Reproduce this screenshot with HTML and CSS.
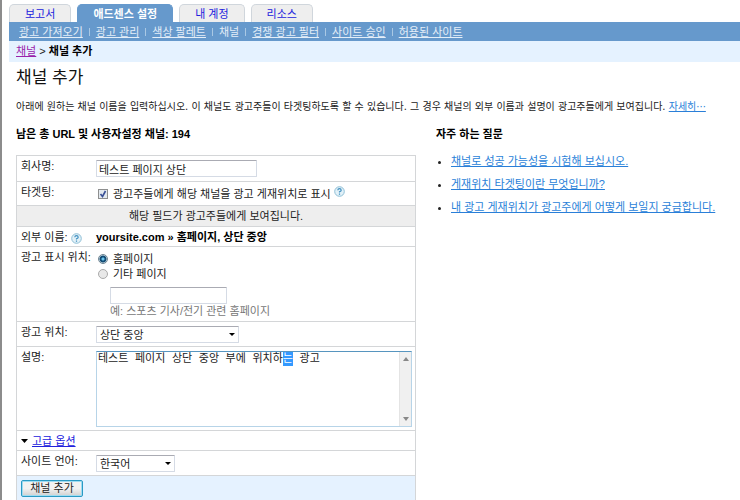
FILE: index.html
```html
<!DOCTYPE html>
<html lang="ko">
<head>
<meta charset="utf-8">
<meta name="viewport" content="width=device-width, initial-scale=1">
<title>채널 추가</title>
<link rel="stylesheet" href="styles.css">
</head>
<body>
<div class="page">
  <header>
    <nav class="tabs">
      <a class="tab" href="#">보고서</a>
      <a class="tab tab-active" href="#">애드센스 설정</a>
      <a class="tab" href="#">내 계정</a>
      <a class="tab" href="#">리소스</a>
    </nav>
    <nav class="subnav">
      <a href="#">광고 가져오기</a><i></i>
      <a href="#">광고 관리</a><i></i>
      <a href="#">색상 팔레트</a><i></i>
      <span>채널</span><i></i>
      <a href="#">경쟁 광고 필터</a><i></i>
      <a href="#">사이트 승인</a><i></i>
      <a href="#">허용된 사이트</a>
    </nav>
    <div class="crumbs"><a href="#">채널</a> &gt; <b>채널 추가</b></div>
  </header>
  <main>
    <h1>채널 추가</h1>
    <p class="intro">아래에 원하는 채널 이름을 입력하십시오. 이 채널도 광고주들이 타겟팅하도록 할 수 있습니다. 그 경우 채널의 외부 이름과 설명이 광고주들에게 보여집니다. <a href="#">자세히···</a></p>
    <div class="columns">
      <section class="main-col">
        <h2>남은 총 URL 및 사용자설정 채널: 194</h2>
        <form class="panel">
          <div class="row row-name">
            <label class="name" for="company">회사명:</label>
            <input class="text company" id="company" type="text" value="테스트 페이지 상단">
          </div>
          <div class="row row-target">
            <span class="name">타겟팅:</span>
            <div class="choice">
              <input class="check" id="target" type="checkbox" checked>
              <label for="target">광고주들에게 해당 채널을 광고 게재위치로 표시</label>
              <svg class="help help-raised" viewBox="0 0 11 11" aria-hidden="true"><circle cx="5.5" cy="5.5" r="4.8" fill="#e2f1f8" stroke="#8fbfd6"/><path d="M3.8 4.2Q3.9 2.7 5.5 2.7T7.2 4.2Q7.2 5.1 5.5 5.7V6.6M5.5 7.6V8.8" fill="none" stroke="#3f8fc0" stroke-width="1.2"/></svg>
            </div>
          </div>
          <div class="row row-note">해당 필드가 광고주들에게 보여집니다.</div>
          <div class="row row-external">
            <span class="name">외부 이름: <svg class="help" viewBox="0 0 11 11" aria-hidden="true"><circle cx="5.5" cy="5.5" r="4.8" fill="#e2f1f8" stroke="#8fbfd6"/><path d="M3.8 4.2Q3.9 2.7 5.5 2.7T7.2 4.2Q7.2 5.1 5.5 5.7V6.6M5.5 7.6V8.8" fill="none" stroke="#3f8fc0" stroke-width="1.2"/></svg></span>
            <b>yoursite.com » 홈페이지, 상단 중앙</b>
          </div>
          <div class="row row-page">
            <span class="name">광고 표시 위치:</span>
            <div class="pages">
              <div class="choice"><input class="radio" id="home" name="page" type="radio" checked><label for="home">홈페이지</label></div>
              <div class="choice"><input class="radio" id="other" name="page" type="radio"><label for="other">기타 페이지</label></div>
              <input class="text other" type="text" aria-label="기타 페이지">
              <p class="hint">예: 스포츠 기사/전기 관련 홈페이지</p>
            </div>
          </div>
          <div class="row row-position">
            <label class="name" for="position">광고 위치:</label>
            <select class="select position" id="position"><option>상단 중앙</option></select>
          </div>
          <div class="row row-desc">
            <label class="name" for="desc">설명:</label>
            <div class="area">
              <textarea id="desc">테스트 페이지 상단 중앙 부에 위치하는 광고</textarea>
              <div class="gutter" aria-hidden="true">
                <svg viewBox="0 0 6 4"><path d="M0 4L3 0L6 4Z"/></svg>
                <svg viewBox="0 0 6 4"><path d="M0 0L3 4L6 0Z"/></svg>
              </div>
            </div>
          </div>
          <div class="row row-advanced">
            <svg class="caret" viewBox="0 0 7 4" aria-hidden="true"><path d="M0 0H7L3.500 4Z"/></svg>
            <a href="#">고급 옵션</a>
          </div>
          <div class="row row-language">
            <label class="name" for="language">사이트 언어:</label>
            <select class="select language" id="language"><option>한국어</option></select>
          </div>
          <div class="row row-submit"><button type="button">채널 추가</button></div>
        </form>
      </section>
      <aside class="faq">
        <h2>자주 하는 질문</h2>
        <ul>
          <li><a href="#">채널로 성공 가능성을 시험해 보십시오.</a></li>
          <li><a href="#">게재위치 타겟팅이란 무엇입니까?</a></li>
          <li><a href="#">내 광고 게재위치가 광고주에게 어떻게 보일지 궁금합니다.</a></li>
        </ul>
      </aside>
    </div>
  </main>
</div>
<script src="script.js"></script>
</body>
</html>
```
FILE: script.js
```js
// Selects the syllable being composed in the description.
const desc = document.getElementById("desc");
const at = desc.value.indexOf("는");
desc.focus({ preventScroll: true });
desc.setSelectionRange(at, at + 1);
```
FILE: styles.css
```css
* { box-sizing: border-box; }
html { overflow: hidden; }
body {
  margin: 0;
  background: #fff;
  color: #222;
  font: 11px/16px "Liberation Sans", "Noto Sans CJK KR", sans-serif;
}
input, select, textarea, button { font: inherit; color: inherit; margin: 0; }
h1, h2, p, ul { margin: 0; padding: 0; }
b, h2 { color: #000; }
.page { border-left: 2px solid #8c8c8c; padding-left: 7px; white-space: nowrap; }
.tabs { display: flex; gap: 6px; padding-top: 4px; }
.tab {
  min-width: 62px;
  height: 18px;
  padding: 1px 15px 0;
  border: 1px solid #d0d6dc;
  border-bottom: 0;
  border-radius: 5px 5px 0 0;
  background: #eee;
  color: #22d;
  text-align: center;
  text-decoration: none;
}
.tab-active { border-color: #69c; background: #69c; color: #fff; font-weight: bold; }
.subnav {
  display: flex;
  align-items: center;
  height: 19px;
  padding-left: 10px;
  background: #69c;
  color: #e4eef8;
}
.subnav a { color: inherit; }
.subnav i { width: 1px; height: 8px; margin: 0 6px; background: #a9c8e4; }
.crumbs { height: 21px; padding: 2px 7px; background: #e5f2ff; }
.crumbs a { color: #92a; }
main { padding-left: 7px; }
h1 { padding-top: 4px; color: #111; font-size: 17px; line-height: 24px; font-weight: normal; }
.intro { padding-top: 9px; font-family: "DejaVu Sans", "Noto Sans CJK KR", sans-serif; font-size: 10px; }
.intro a, .faq a { color: #2a7fd8; }
h2 { font-size: 11px; line-height: 16px; }
.columns { display: flex; gap: 20px; padding-top: 11px; }
.main-col { flex: 0 0 400px; }
.panel { margin-top: 13px; border: 1px solid #d4d6d8; border-bottom: 0; }
.row { display: flex; padding-left: 4px; border-bottom: 1px solid #d4d6d8; }
.name { flex: 0 0 75px; }
.row-name { height: 26px; padding-top: 2px; }
.row-target { height: 24px; }
.row-target .name { padding-top: 2px; }
.row-note { justify-content: center; height: 21px; padding: 2px 0; background: #eee; }
.row-external { height: 20px; padding-top: 2px; }
.row-page { height: 75px; padding-top: 2px; }
.row-position { height: 25px; padding-top: 2px; }
.row-desc { height: 84px; padding-top: 2px; }
.row-advanced { align-items: center; gap: 4px; height: 20px; }
.row-advanced a { color: #22d; }
.row-language { height: 25px; padding-top: 2px; }
.row-submit { height: 32px; padding-top: 4px; background: #e5f2ff; }
.text { height: 17px; padding: 0 2px; border: 1px solid #d5dbe5; border-top-color: #aaabb3; border-radius: 1px; background: #fff; }
.company { width: 161px; margin-top: 2px; }
.choice { display: flex; align-items: center; height: 15px; padding-left: 2px; }
.row-target .choice { height: 23px; }
.check, .radio { flex: none; appearance: none; width: 10px; height: 10px; margin-right: 5px; border: 1px solid #8e8f8f; background: #e3e9ef; }
.check:checked {
  background: #e3e9ef url("data:image/svg+xml,%3Csvg xmlns='http://www.w3.org/2000/svg' viewBox='0 0 8 8'%3E%3Cpath d='M1.500 4L3.500 6.500L6.500 1' fill='none' stroke='%23384f96' stroke-width='1.600'/%3E%3C/svg%3E");
}
.radio { border-color: #aaa; border-radius: 50%; background: #e8e8e8; }
.radio:checked { border-color: #6e8593; background: radial-gradient(circle, #6cc5ee 0 1px, #124d76 2px 3px, #dde8ee 4px); }
.help { width: 11px; height: 11px; vertical-align: middle; }
.help-raised { margin: 0 0 4px 3px; }
.pages { padding-top: 2px; }
.other { display: block; width: 117px; margin: 6px 0 0 14px; }
.hint { margin-left: 14px; line-height: 15px; color: #777; }
.select {
  appearance: none;
  height: 17px;
  margin-top: 2px;
  padding: 0 3px;
  border: 1px solid #d5dbe5;
  border-top-color: #aaabb3;
  border-radius: 1px;
  background: #fff url("data:image/svg+xml,%3Csvg xmlns='http://www.w3.org/2000/svg' width='6' height='3' viewBox='0 0 6 3'%3E%3Cpath d='M0 0H6L3 3Z'/%3E%3C/svg%3E") no-repeat right 3px center;
}
.position { width: 143px; }
.language { width: 79px; }
.area { display: flex; width: 316px; height: 76px; margin-top: 2px; border: 1px solid #b7d4e8; border-top-color: #5795bf; }
textarea {
  flex: 1;
  min-width: 0;
  padding: 0 1px;
  border: 0;
  outline: 0;
  resize: none;
  overflow: hidden;
  background: #fff;
  font-family: "Liberation Mono", "Noto Sans CJK KR", monospace;
  line-height: 14px;
}
textarea::selection { background: #39f; color: #fff; }
.gutter { display: flex; flex-direction: column; justify-content: space-between; align-items: center; width: 12px; padding: 5px 0; border-left: 1px solid #e4e4e4; background: #f0f0f0; }
.gutter svg { width: 6px; height: 4px; fill: #888; }
.caret { width: 7px; height: 4px; }
button {
  width: 62px;
  height: 17px;
  padding: 0;
  border: 1px solid #2a9ac4;
  border-radius: 2px;
  background: linear-gradient(#f2f2f2 50%, #d0d0d0);
  box-shadow: inset 0 0 0 1px #9fdcf2;
  line-height: 13px;
}
.faq ul { padding: 11px 0 0 15px; }
.faq li { height: 23px; }
```
